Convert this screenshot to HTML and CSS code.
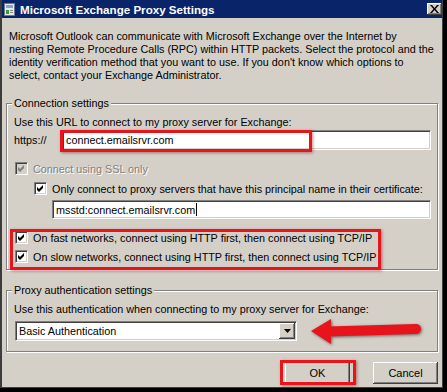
FILE: index.html
```html
<!DOCTYPE html>
<html lang="en">
<head>
  <meta charset="UTF-8">
  <meta name="viewport" content="width=device-width, initial-scale=1.0">
  <title>Microsoft Exchange Proxy Settings</title>
  <link rel="stylesheet" href="styles.css">
</head>
<body>
  <div class="window">
    <div class="titlebar">
      <svg class="app-icon" width="14" height="15" viewBox="0 0 14 15">
        <rect x="1.5" y="1.5" width="10" height="12" fill="#e8e8e8" stroke="#6d7b8c"/>
        <rect x="3" y="3" width="7" height="3" fill="#7fa6d8"/>
        <rect x="3" y="8" width="3" height="4" fill="#3f9c35"/>
        <rect x="7" y="8" width="3" height="1" fill="#8a8a8a"/>
        <rect x="7" y="10" width="3" height="1" fill="#8a8a8a"/>
      </svg>
      <span class="title">Microsoft Exchange Proxy Settings</span>
      <span class="close">
        <svg width="9" height="8" viewBox="0 0 9 8">
          <path d="M0 0h2l2.5 3 2.5-3h2L5.5 4 9 8H7L4.5 5 2 8H0l3.5-4z" fill="#000"/>
        </svg>
      </span>
    </div>

    <div class="content">
      <p class="intro">Microsoft Outlook can communicate with Microsoft Exchange over the Internet by<br>
        nesting Remote Procedure Calls (RPC) within HTTP packets. Select the protocol and the<br>
        identity verification method that you want to use. If you don't know which options to<br>
        select, contact your Exchange Administrator.</p>

      <fieldset class="group">
        <legend>Connection settings</legend>
        <div class="line">Use this URL to connect to my proxy server for Exchange:</div>
        <div class="url-row">
          <span class="prefix">https://</span>
          <div class="field url-field">connect.emailsrvr.com</div>
        </div>
        <div class="check-row ssl disabled">
          <span class="check"><svg width="11" height="11" viewBox="0 0 11 11"><polygon points="2,4 4,6 8,2 8,5 4,9 2,7"/></svg></span>
          <span class="label">Connect using SSL only</span>
        </div>
        <div class="check-row principal">
          <span class="check"><svg width="11" height="11" viewBox="0 0 11 11"><polygon points="2,4 4,6 8,2 8,5 4,9 2,7"/></svg></span>
          <span class="label">Only connect to proxy servers that have this principal name in their certificate:</span>
        </div>
        <div class="field cert-field">msstd:connect.emailsrvr.com<span class="caret"></span></div>
        <div class="check-row fast">
          <span class="check"><svg width="11" height="11" viewBox="0 0 11 11"><polygon points="2,4 4,6 8,2 8,5 4,9 2,7"/></svg></span>
          <span class="label">On fast networks, connect using HTTP first, then connect using TCP/IP</span>
        </div>
        <div class="check-row slow">
          <span class="check"><svg width="11" height="11" viewBox="0 0 11 11"><polygon points="2,4 4,6 8,2 8,5 4,9 2,7"/></svg></span>
          <span class="label">On slow networks, connect using HTTP first, then connect using TCP/IP</span>
        </div>
      </fieldset>

      <fieldset class="group auth">
        <legend>Proxy authentication settings</legend>
        <div class="line">Use this authentication when connecting to my proxy server for Exchange:</div>
        <div class="field select">
          <span>Basic Authentication</span>
          <span class="drop">
            <svg width="7" height="4" viewBox="0 0 7 4"><polygon points="0,0 7,0 3.5,4"/></svg>
          </span>
        </div>
      </fieldset>

      <div class="buttons">
        <button class="btn">OK</button>
        <button class="btn">Cancel</button>
      </div>
    </div>

    <!-- red annotations drawn over the dialog -->
    <div class="mark mark-url"></div>
    <div class="mark mark-checks"></div>
    <div class="mark mark-ok"></div>
    <svg class="arrow" width="120" height="30" viewBox="0 0 120 30">
      <polygon points="2,13 22,1 22,26" fill="#e8141c"/>
      <path d="M19 13.5 L107 11" stroke="#e8141c" stroke-width="10" stroke-linecap="round" fill="none"/>
    </svg>
  </div>
</body>
</html>
```

FILE: styles.css
```css
body {
  margin: 0;
  background-color: #000;
  font-family: 'Liberation Sans', Arial, sans-serif;
  font-size: 10.8px;
  color: #000;
}

.window {
  position: relative;
  width: 440px;
  height: 387px;
  background-color: #d4d0c8;
  border-left: 2px solid #3c3c3c;
  border-right: 1px solid #404040;
  border-bottom: 1px solid #404040;
  display: flex;
  flex-direction: column;
}

.titlebar {
  height: 18px;
  background-color: #0a246a;
  display: flex;
  align-items: center;
  padding-left: 1px;
  box-sizing: border-box;
}

.app-icon {
  margin-right: 3px;
}

.title {
  flex: 1;
  color: #fff;
  font-weight: bold;
  font-size: 11.6px;
}

.close {
  width: 15px;
  height: 12px;
  background: #d4d0c8;
  box-shadow: inset -1px -1px #404040, inset 1px 1px #fff, inset -2px -2px #808080;
  display: flex;
  align-items: center;
  justify-content: center;
}

.content {
  flex: 1;
  padding: 0 4px;
  display: flex;
  flex-direction: column;
}

.intro {
  margin: 12px 0 0 3px;
  line-height: 13px;
  white-space: nowrap;
}

.group {
  margin: 15px 0 0 0;
  padding: 6px 6px 6px 7px;
  border: 1px solid #808080;
  box-shadow: inset 1px 1px #fff, 1px 1px #fff;
  min-width: 0;
}

.group legend {
  padding: 0 2px;
  margin-left: -2px;
  line-height: 13px;
  background: #d4d0c8;
}

.line {
  line-height: 13px;
}

.url-row {
  display: flex;
  align-items: center;
  margin-top: 1px;
}

.prefix {
  width: 48px;
}

.field {
  flex: 1;
  height: 20px;
  box-sizing: border-box;
  background: #fff;
  border: 1px solid;
  border-color: #808080 #fff #fff #808080;
  box-shadow: inset 1px 1px #404040, inset -1px -1px #d4d0c8;
  padding: 0 3px;
  display: flex;
  align-items: center;
}

.check-row {
  display: flex;
  align-items: center;
  height: 13px;
  margin-left: 1px;
}

.check {
  width: 13px;
  height: 13px;
  box-sizing: border-box;
  background: #fff;
  border: 1px solid;
  border-color: #808080 #fff #fff #808080;
  box-shadow: inset 1px 1px #404040, inset -1px -1px #d4d0c8;
  margin-right: 5px;
  display: flex;
}

.check svg {
  fill: #000;
}

.disabled .check {
  background: #d4d0c8;
}

.disabled .check svg {
  fill: #808080;
}

.disabled .label {
  color: #808080;
  text-shadow: 1px 1px #fff;
}

.ssl {
  margin-top: 12px;
}

.principal {
  margin-top: 7px;
  margin-left: 20px;
}

.cert-field {
  flex: none;
  height: 19px;
  margin-top: 5px;
  margin-left: 38px;
}

.caret {
  display: inline-block;
  width: 1px;
  height: 13px;
  background: #000;
  margin-left: 1px;
}

.fast {
  margin-top: 12px;
}

.slow {
  margin-top: 6px;
}

.auth {
  margin-top: 14px;
  padding-bottom: 10px;
}

.select {
  flex: none;
  width: 282px;
  margin-top: 5px;
  margin-left: 1px;
  padding-right: 1px;
  justify-content: space-between;
}

.drop {
  width: 16px;
  height: 16px;
  box-sizing: border-box;
  background: #d4d0c8;
  box-shadow: inset -1px -1px #404040, inset 1px 1px #fff, inset -2px -2px #808080;
  display: flex;
  align-items: center;
  justify-content: center;
}

.buttons {
  display: flex;
  justify-content: flex-end;
  gap: 23px;
  margin-top: 10px;
}

.btn {
  width: 65px;
  height: 22px;
  font-family: inherit;
  font-size: 11px;
  color: #000;
  background: #d4d0c8;
  border: none;
  box-shadow: inset -1px -1px #404040, inset 1px 1px #fff, inset -2px -2px #808080;
  padding: 0;
}

.mark {
  position: absolute;
  border: 3px solid #e8141c;
  box-shadow: 1px 1px 3px rgba(120, 0, 0, 0.45);
  box-sizing: border-box;
}

.mark-url {
  left: 58px;
  top: 130px;
  width: 252px;
  height: 22px;
}

.mark-checks {
  left: 8px;
  top: 229px;
  width: 371px;
  height: 41px;
}

.mark-ok {
  left: 278px;
  top: 360px;
  width: 76px;
  height: 25px;
}

.arrow {
  position: absolute;
  left: 307px;
  top: 318px;
  filter: drop-shadow(1px 1px 1.5px rgba(0, 0, 0, 0.5));
}
```
